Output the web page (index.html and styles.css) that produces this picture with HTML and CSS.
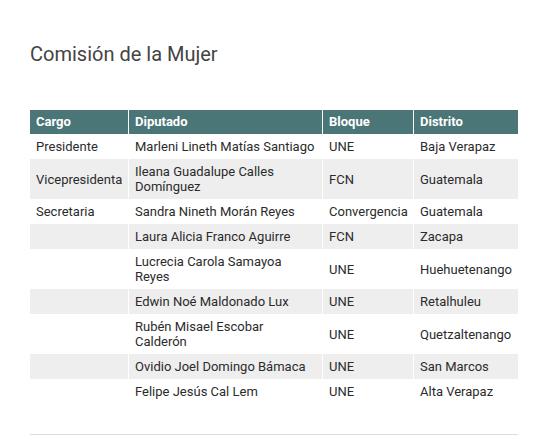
FILE: index.html
```html
<!DOCTYPE html>
<html lang="es">
<head>
<meta charset="utf-8">
<link rel="stylesheet" href="styles.css">
</head>
<body>
<div class="page">
  <h2 class="title">Comisión de la Mujer</h2>
  <table class="tbl">
    <colgroup>
      <col class="c1"><col class="c2"><col class="c3"><col class="c4">
    </colgroup>
    <thead>
      <tr><th>Cargo</th><th>Diputado</th><th>Bloque</th><th>Distrito</th></tr>
    </thead>
    <tbody>
      <tr><td>Presidente</td><td>Marleni Lineth Matías Santiago</td><td>UNE</td><td>Baja Verapaz</td></tr>
      <tr><td>Vicepresidenta</td><td>Ileana Guadalupe Calles Domínguez</td><td>FCN</td><td>Guatemala</td></tr>
      <tr><td>Secretaria</td><td>Sandra Nineth Morán Reyes</td><td>Convergencia</td><td>Guatemala</td></tr>
      <tr><td></td><td>Laura Alicia Franco Aguirre</td><td>FCN</td><td>Zacapa</td></tr>
      <tr><td></td><td>Lucrecia Carola Samayoa Reyes</td><td>UNE</td><td>Huehuetenango</td></tr>
      <tr><td></td><td>Edwin Noé Maldonado Lux</td><td>UNE</td><td>Retalhuleu</td></tr>
      <tr><td></td><td>Rubén Misael Escobar Calderón</td><td>UNE</td><td>Quetzaltenango</td></tr>
      <tr><td></td><td>Ovidio Joel Domingo Bámaca</td><td>UNE</td><td>San Marcos</td></tr>
      <tr><td></td><td>Felipe Jesús Cal Lem</td><td>UNE</td><td>Alta Verapaz</td></tr>
    </tbody>
  </table>
  <div class="rule"></div>
</div>
</body>
</html>
```

FILE: styles.css
```css
html, body {
  margin: 0;
  padding: 0;
  background: #fff;
}
body {
  font-family: Roboto, "Liberation Sans", sans-serif;
  color: #2b2b2b;
}
.page {
  padding: 42px 30px 0 30px;
}
.title {
  margin: 0 0 44px 0;
  font-size: 20px;
  font-weight: 400;
  line-height: 24px;
  color: #444;
}
.tbl {
  width: 488px;
  table-layout: fixed;
  border-collapse: separate;
  border-spacing: 0;
  font-size: 13px;
  line-height: 15px;
}
.c1 { width: 99px; }
.c2 { width: 194px; }
.c3 { width: 91px; }
.c4 { width: 104px; }
.tbl th, .tbl td {
  text-align: left;
  vertical-align: middle;
  padding: 5px 6px;
  border-right: 1px solid #fff;
}
.tbl th:last-child, .tbl td:last-child {
  border-right: 0;
}
.tbl th {
  background: #4a7677;
  color: #fff;
  font-weight: 700;
  padding: 4px 6px 5px 6px;
}
.tbl tbody tr:nth-child(even) td {
  background: #eeeeee;
}
.rule {
  margin-top: 30px;
  width: 488px;
  height: 1px;
  background: #ddd;
}
```
